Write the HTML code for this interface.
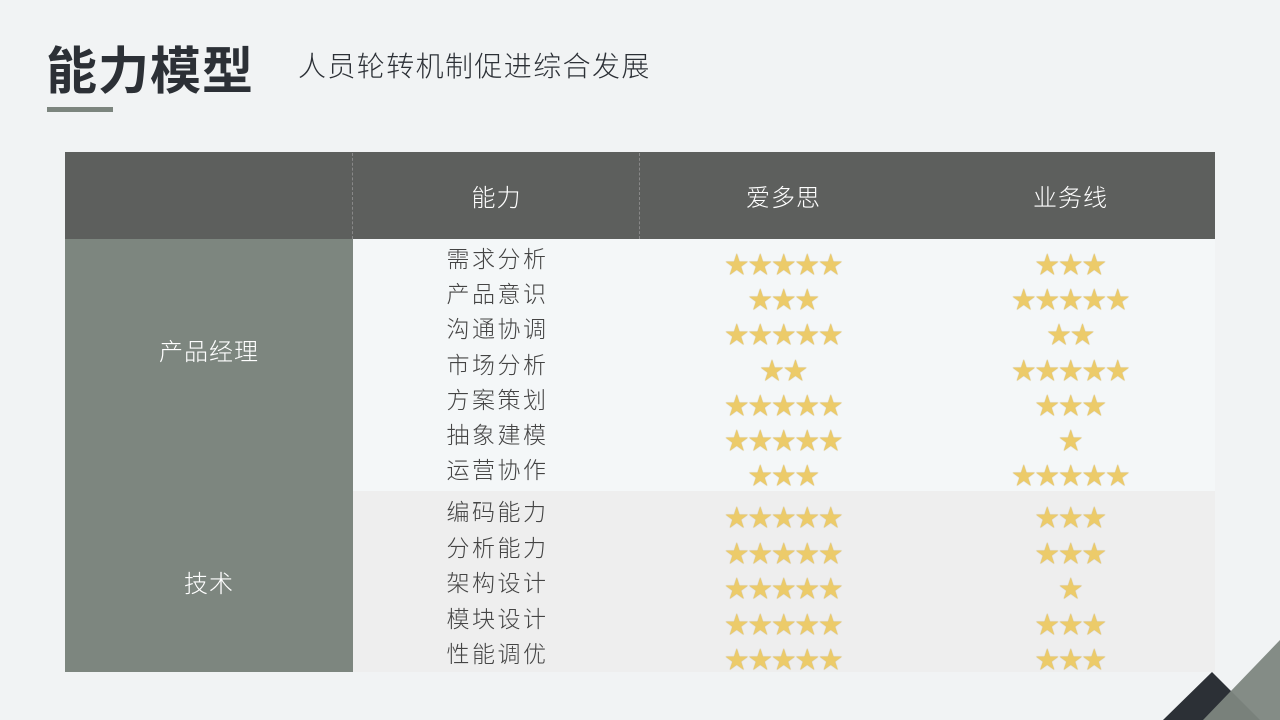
<!DOCTYPE html>
<html><head><meta charset="utf-8"><style>
body{margin:0;width:1280px;height:720px;background:#f1f3f4;position:relative;overflow:hidden;font-family:"Liberation Sans","Noto Sans CJK SC",sans-serif}
.t{position:absolute;left:46px;top:30px;font-size:51px;font-weight:bold;color:#2c3036;letter-spacing:1px}
.s{position:absolute;left:298px;top:45px;font-size:28px;color:#2c3036;letter-spacing:1.4px;font-weight:300}
.u{position:absolute;left:47px;top:107px;width:66px;height:5px;background:#7c857e}
.tb{position:absolute;left:65px;top:152px;width:1150px;height:520px;border:1px solid #ccc6b5;box-sizing:border-box}
.hd{position:absolute;left:-1px;top:-1px;width:1150px;height:87px;background:#5d5f5d}
.c{position:absolute;color:#fff;font-size:24px;text-align:center;font-weight:300;letter-spacing:1px}
.side{position:absolute;left:-1px;width:288px;background:#7d867f;color:#fff;font-size:24px;font-weight:300}
.side span{position:absolute;left:0;width:288px;text-align:center;letter-spacing:1px}
.row{position:absolute;left:0;width:1150px;height:35.5px;font-size:23px;color:#444;font-weight:300}
.row span{position:absolute;text-align:center;line-height:35px}
.row .n{letter-spacing:2.5px}
.st{color:#eccb6a;font-size:24px;letter-spacing:-0.5px;text-shadow:0 0 1px #b8a060}
.vl{position:absolute;top:0;height:86px;border-left:1px dashed #888}
</style></head><body>
<div class="t">能力模型</div>
<div class="s">人员轮转机制促进综合发展</div>
<div class="u"></div>
<div class="tb">
<div class="hd"></div>
<div class="vl" style="left:286px"></div><div class="vl" style="left:573px"></div>
<div class="c" style="left:287px;width:287px;top:25px">能力</div>
<div class="c" style="left:574px;width:287px;top:25px">爱多思</div>
<div class="c" style="left:861px;width:287px;top:25px">业务线</div>
<div style="position:absolute;left:287px;top:86px;width:862px;height:252px;background:#f4f7f8"></div>
<div style="position:absolute;left:287px;top:338px;width:862px;height:181px;background:#eeeeee"></div>
<div class="side" style="top:86px;height:252px"><span style="top:93px">产品经理</span></div>
<div class="side" style="top:338px;height:181px"><span style="top:73px">技术</span></div>
<div id="rows"></div>
</div>
<svg style="position:absolute;left:0;top:0" width="1280" height="720"><polygon points="1212,672 1163,720 1260,720" fill="#2c3036"/><polygon points="1280,640 1280,720 1203,720" fill="#7d867f" opacity="0.95"/></svg>
<script>
var d=[["需求分析",5,3],["产品意识",3,5],["沟通协调",5,2],["市场分析",2,5],["方案策划",5,3],["抽象建模",5,1],["运营协作",3,5],["编码能力",5,3],["分析能力",5,3],["架构设计",5,1],["模块设计",5,3],["性能调优",5,3]];
var h="";
d.forEach(function(r,i){var y=i<7?87+i*35.2+2:338+(i-7)*35.5+4;
h+='<div class="row" style="top:'+y+'px"><span class="n" style="left:288px;width:287px">'+r[0]+'</span><span class="st" style="top:6px;left:574px;width:287px">'+"★".repeat(r[1])+'</span><span class="st" style="top:6px;left:861px;width:287px">'+"★".repeat(r[2])+'</span></div>';});
document.getElementById("rows").innerHTML=h;
</script>
</body></html>
